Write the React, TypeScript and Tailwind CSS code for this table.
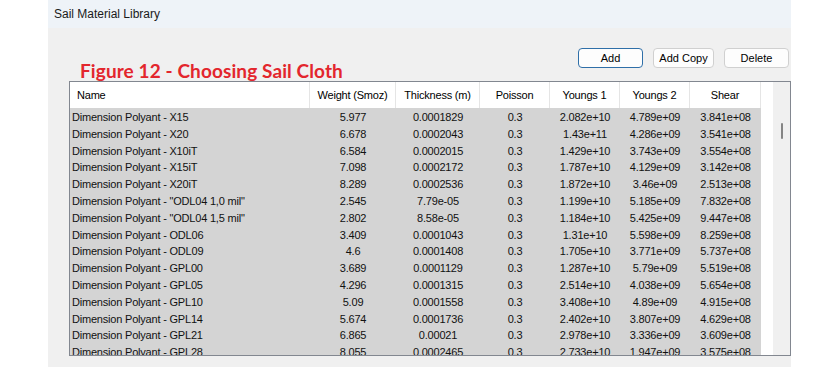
import React from 'react';

type Row = [string, string, string, string, string, string, string];

const rows: Row[] = [
  ['Dimension Polyant - X15', '5.977', '0.0001829', '0.3', '2.082e+10', '4.789e+09', '3.841e+08'],
  ['Dimension Polyant - X20', '6.678', '0.0002043', '0.3', '1.43e+11', '4.286e+09', '3.541e+08'],
  ['Dimension Polyant - X10iT', '6.584', '0.0002015', '0.3', '1.429e+10', '3.743e+09', '3.554e+08'],
  ['Dimension Polyant - X15iT', '7.098', '0.0002172', '0.3', '1.787e+10', '4.129e+09', '3.142e+08'],
  ['Dimension Polyant - X20iT', '8.289', '0.0002536', '0.3', '1.872e+10', '3.46e+09', '2.513e+08'],
  ['Dimension Polyant - "ODL04 1,0 mil"', '2.545', '7.79e-05', '0.3', '1.199e+10', '5.185e+09', '7.832e+08'],
  ['Dimension Polyant - "ODL04 1,5 mil"', '2.802', '8.58e-05', '0.3', '1.184e+10', '5.425e+09', '9.447e+08'],
  ['Dimension Polyant - ODL06', '3.409', '0.0001043', '0.3', '1.31e+10', '5.598e+09', '8.259e+08'],
  ['Dimension Polyant - ODL09', '4.6', '0.0001408', '0.3', '1.705e+10', '3.771e+09', '5.737e+08'],
  ['Dimension Polyant - GPL00', '3.689', '0.0001129', '0.3', '1.287e+10', '5.79e+09', '5.519e+08'],
  ['Dimension Polyant - GPL05', '4.296', '0.0001315', '0.3', '2.514e+10', '4.038e+09', '5.654e+08'],
  ['Dimension Polyant - GPL10', '5.09', '0.0001558', '0.3', '3.408e+10', '4.89e+09', '4.915e+08'],
  ['Dimension Polyant - GPL14', '5.674', '0.0001736', '0.3', '2.402e+10', '3.807e+09', '4.629e+08'],
  ['Dimension Polyant - GPL21', '6.865', '0.00021', '0.3', '2.978e+10', '3.336e+09', '3.609e+08'],
  ['Dimension Polyant - GPL28', '8.055', '0.0002465', '0.3', '2.733e+10', '1.947e+09', '3.575e+08'],
];

const headers = ['Weight (Smoz)', 'Thickness (m)', 'Poisson', 'Youngs 1', 'Youngs 2', 'Shear'];

const cols = 'grid grid-cols-[240px_86px_84px_70px_70px_70px_71px]';

export default function App() {
  return (
    <div className="flex w-[840px] h-[367px] bg-white overflow-hidden font-['Liberation_Sans',Arial,sans-serif]">
      <div className="ml-[48px] w-[743px] flex flex-col">
        {/* title bar */}
        <div className="h-[28px] bg-[#eef3f8] flex items-center pl-[6px] text-[12px] text-[#1a1a1a]">Sail Material Library</div>

        <div className="flex-1 bg-[#f0f0f0] flex flex-col">
          <div className="h-[53px] shrink-0 flex justify-between pt-[20px] pl-[32px] pr-[2px]">
            <h1 className="self-end mb-[-1px] font-['Lato',sans-serif] font-bold text-[19px] leading-[22px] tracking-[0.1px] text-[#e3262d]">
              Figure 12 - Choosing Sail Cloth
            </h1>
            <div className="flex gap-[10px] h-[20px] text-[11px] text-black">
              <button className="w-[65px] h-[20px] rounded-[4px] border border-[#2f6fa8] bg-[#fdfdfd]">Add</button>
              <button className="w-[61px] h-[20px] rounded-[4px] border border-[#d0d0d0] bg-[#fdfdfd]">Add Copy</button>
              <button className="w-[65px] h-[20px] rounded-[4px] border border-[#d0d0d0] bg-[#fdfdfd]">Delete</button>
            </div>
          </div>

          {/* table */}
          <div className="ml-[21px] w-[722px] h-[275px] shrink-0 border border-[#828790] bg-white flex text-[11px] tracking-[-0.2px]">
            <div className="w-[703px] flex flex-col overflow-hidden">
              <div className={`${cols} shrink-0 w-[691px] h-[26px] bg-white text-black`}>
                <div className="flex items-center pl-[7px] border-r border-[#e5e5e5]">Name</div>
                {headers.map((h) => (
                  <div key={h} className="flex items-center justify-center border-r border-[#e5e5e5]">{h}</div>
                ))}
              </div>
              <div className="shrink-0 w-[691px] bg-[#d4d4d4] text-[#111]">
                {rows.map((r) => (
                  <div key={r[0]} className={`${cols} h-[16.8px] items-center pt-[1px]`}>
                    <div className="pl-[2px] whitespace-nowrap">{r[0]}</div>
                    {r.slice(1).map((v, i) => (
                      <div key={i} className="text-center whitespace-nowrap">{v}</div>
                    ))}
                  </div>
                ))}
              </div>
            </div>
            {/* scrollbar */}
            <div className="w-[17px] bg-[#f0f0f0] flex justify-center pt-[41px]">
              <div className="w-[2px] h-[16px] bg-[#858585] rounded-full" />
            </div>
          </div>
        </div>
      </div>
    </div>
  );
}
